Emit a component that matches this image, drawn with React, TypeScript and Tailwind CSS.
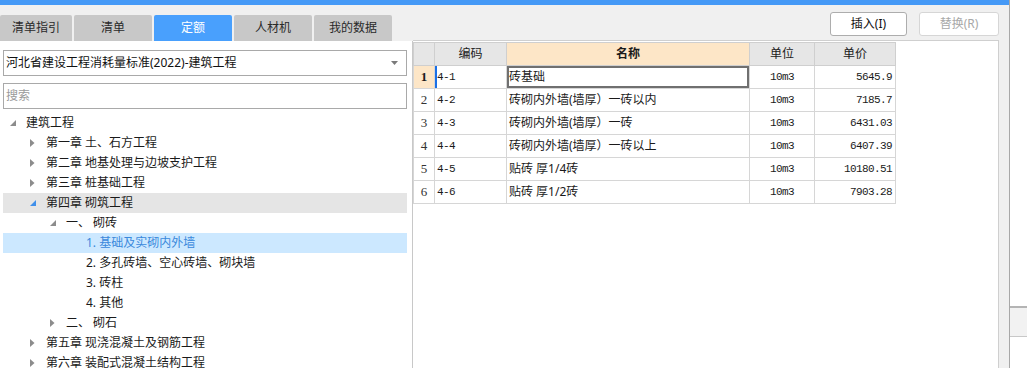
import React from "react";

const CJK = "font-['Noto_Sans','Noto_Sans_CJK_SC',sans-serif]";

type Node = { lvl: number; tri?: "right" | "down" | "downBlue"; text: string; hover?: boolean; selected?: boolean };

const tree: Node[] = [
  { lvl: 0, tri: "down", text: "建筑工程" },
  { lvl: 1, tri: "right", text: "第一章 土、石方工程" },
  { lvl: 1, tri: "right", text: "第二章 地基处理与边坡支护工程" },
  { lvl: 1, tri: "right", text: "第三章 桩基础工程" },
  { lvl: 1, tri: "downBlue", text: "第四章 砌筑工程", hover: true },
  { lvl: 2, tri: "down", text: "一、 砌砖" },
  { lvl: 3, text: "1. 基础及实砌内外墙", selected: true },
  { lvl: 3, text: "2. 多孔砖墙、空心砖墙、砌块墙" },
  { lvl: 3, text: "3. 砖柱" },
  { lvl: 3, text: "4. 其他" },
  { lvl: 2, tri: "right", text: "二、 砌石" },
  { lvl: 1, tri: "right", text: "第五章 现浇混凝土及钢筋工程" },
  { lvl: 1, tri: "right", text: "第六章 装配式混凝土结构工程" },
];

const pads = ["pl-[3px]", "pl-[23px]", "pl-[43px]", "pl-[63px]"];

const rows = [
  { code: "4-1", name: "砖基础", unit: "10m3", price: "5645.9" },
  { code: "4-2", name: "砖砌内外墙(墙厚）一砖以内", unit: "10m3", price: "7185.7" },
  { code: "4-3", name: "砖砌内外墙(墙厚）一砖", unit: "10m3", price: "6431.03" },
  { code: "4-4", name: "砖砌内外墙(墙厚）一砖以上", unit: "10m3", price: "6407.39" },
  { code: "4-5", name: "贴砖 厚1/4砖", unit: "10m3", price: "10180.51" },
  { code: "4-6", name: "贴砖 厚1/2砖", unit: "10m3", price: "7903.28" },
];

function Tri({ kind }: { kind?: Node["tri"] }) {
  if (!kind) return null;
  if (kind === "right")
    return (
      <svg width="5" height="8" viewBox="0 0 5 8">
        <path d="M0 0 L4.5 4 L0 8 Z" fill="#8c8c8c" />
      </svg>
    );
  return (
    <svg width="6" height="6" viewBox="0 0 6 6">
      <path d="M6 0 L6 6 L0 6 Z" fill={kind === "downBlue" ? "#3f8fea" : "#8c8c8c"} />
    </svg>
  );
}

const tabs = [
  { t: "清单指引", w: "w-[72px]" },
  { t: "清单", w: "w-[78px]" },
  { t: "定额", w: "w-[78px]", active: true },
  { t: "人材机", w: "w-[78px]" },
  { t: "我的数据", w: "w-[78px]" },
];

const mono = "font-['Liberation_Mono',monospace] text-[11px] tracking-[-0.6px]";

export default function App() {
  return (
    <div className={`w-[1027px] h-[368px] overflow-hidden bg-white flex ${CJK} text-[12px] text-[#1a1a1a]`}>
      {/* application */}
      <div className="w-[1010px] h-full flex flex-col bg-[#f0f0f0] border-r border-[#a8a8a8] shrink-0">
        <div className="h-[5px] bg-[#4599f6] shrink-0" />
        <div className="flex flex-1 min-h-0">
          {/* left column */}
          <div className="w-[413px] flex flex-col shrink-0 min-h-0">
            <div className="h-[10px] shrink-0" />
            <div className="flex h-[26px] gap-[2px] shrink-0">
              {tabs.map((t) => (
                <div
                  key={t.t}
                  className={`${t.w} h-full flex items-center justify-center text-[12px] rounded-t-[2px] ${
                    t.active ? "bg-[#49a0fd] text-white" : "bg-[#c8c8c8] text-[#2a2a2a]"
                  }`}
                >
                  {t.t}
                </div>
              ))}
            </div>
            <div className="flex-1 min-h-0 overflow-hidden bg-white border-r border-[#c8c8c8] flex flex-col">
              <div className="shrink-0 mt-[9px] ml-[3px] mr-[5px] h-[26px] border border-[#a9a9a9] flex items-center pl-[2px] pr-[8px] text-[12px] text-[#111]">
                <span className="flex-1">河北省建设工程消耗量标准(2022)-建筑工程</span>
                <svg width="7" height="4" viewBox="0 0 7 4">
                  <path d="M0 0 L7 0 L3.5 4 Z" fill="#7a7a7a" />
                </svg>
              </div>
              <div className="shrink-0 mt-[7px] ml-[3px] mr-[5px] h-[26px] border border-[#a9a9a9] flex items-center pl-[2px] text-[12px] text-[#9a9a9a]">
                搜索
              </div>
              <div className="shrink-0 mt-[4px] ml-[3px] mr-[5px] flex flex-col">
                {tree.map((n, i) => (
                  <div
                    key={i}
                    className={`shrink-0 h-[20px] flex items-center ${pads[n.lvl]} ${
                      n.selected ? "bg-[#cce8ff] text-[#3a88dc]" : n.hover ? "bg-[#e5e5e5]" : ""
                    }`}
                  >
                    <div className="w-[20px] h-full flex items-center pl-[4px]">
                      <Tri kind={n.tri} />
                    </div>
                    <span className="text-[12px] whitespace-pre">{n.text}</span>
                  </div>
                ))}
              </div>
            </div>
          </div>
          {/* right column */}
          <div className="flex-1 flex flex-col min-h-0">
            <div className="shrink-0 h-[35px] flex items-start justify-end pt-[7px] pr-[10px] gap-[12px]">
              <div className="w-[77px] h-[24px] bg-white border border-[#adadad] rounded-[3px] flex items-center justify-center text-[12px] text-[#111]">
                插入(I)
              </div>
              <div className="w-[80px] h-[24px] bg-white border border-[#d6d6d6] rounded-[3px] flex items-center justify-center text-[12px] text-[#a8a8a8]">
                替换(R)
              </div>
            </div>
            <div className="flex-1 min-h-0 flex">
              <div className="w-[586px] bg-white border-t border-r border-[#cfcfcf] pt-[1px]">
                <table className="table-fixed border-collapse w-[482px]">
                  <colgroup>
                    <col className="w-[21px]" />
                    <col className="w-[72px]" />
                    <col className="w-[243px]" />
                    <col className="w-[65px]" />
                    <col className="w-[81px]" />
                  </colgroup>
                  <thead>
                    <tr className="h-[23px] text-[12px]">
                      <th className="bg-[#e6e6e6] border border-[#cfcfcf] font-normal" />
                      <th className="bg-[#e6e6e6] border border-[#cfcfcf] font-normal">编码</th>
                      <th className="bg-[#fde6c7] border border-[#cfcfcf] font-bold">名称</th>
                      <th className="bg-[#e6e6e6] border border-[#cfcfcf] font-normal">单位</th>
                      <th className="bg-[#e6e6e6] border border-[#cfcfcf] font-normal">单价</th>
                    </tr>
                  </thead>
                  <tbody>
                    {rows.map((r, i) => (
                      <tr key={r.code} className="h-[23px]">
                        <td
                          className={`border border-[#d6d6d6] text-center font-['Liberation_Serif',serif] text-[13px] ${
                            i === 0 ? "bg-[#fde6c7] font-bold" : "text-[#333]"
                          }`}
                        >
                          {i + 1}
                        </td>
                        <td
                          className={`border border-[#d6d6d6] pl-[2px] ${mono} ${
                            i === 0 ? "shadow-[inset_2px_0_0_#1a6fe6]" : ""
                          }`}
                        >
                          {r.code}
                        </td>
                        <td
                          className={`border border-[#d6d6d6] pl-[2px] text-[12px] whitespace-pre ${
                            i === 0 ? "shadow-[inset_0_0_0_2px_#707070]" : ""
                          }`}
                        >
                          {r.name}
                        </td>
                        <td className={`border border-[#d6d6d6] text-center ${mono}`}>{r.unit}</td>
                        <td className={`border border-[#d6d6d6] text-right pr-[3px] ${mono}`}>{r.price}</td>
                      </tr>
                    ))}
                  </tbody>
                </table>
              </div>
              <div className="flex-1" />
            </div>
          </div>
        </div>
      </div>
      {/* outside strip */}
      <div className="flex-1 flex flex-col">
        <div className="h-[306px] shrink-0" />
        <div className="h-[31px] shrink-0 bg-[#f2f2f2] border-t-2 border-b border-t-[#b4b4b4] border-b-[#c8c8c8]" />
        <div className="flex-1" />
      </div>
    </div>
  );
}
